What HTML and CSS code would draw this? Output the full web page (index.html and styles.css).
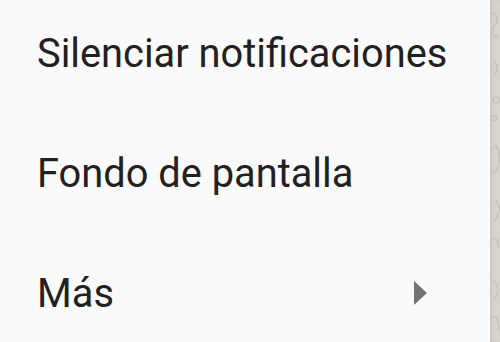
FILE: index.html
```html
<!DOCTYPE html>
<html lang="es">
<head>
<meta charset="utf-8">
<link rel="stylesheet" href="styles.css">
</head>
<body>
<div class="screen">
  <div class="menu">
    <div class="item"><span class="label">Silenciar notificaciones</span></div>
    <div class="item"><span class="label">Fondo de pantalla</span></div>
    <div class="item"><span class="label">Más</span><span class="arrow"></span></div>
  </div>
  <div class="wallpaper">
    <svg width="10" height="342" viewBox="0 0 10 342" fill="none" stroke="#c4c0ba" stroke-width="1.2">
      <path d="M0 14 C6 10 10 20 4 26 C0 30 2 36 8 38"/>
      <path d="M3 60 C8 64 9 72 3 76"/>
      <circle cx="6" cy="100" r="3"/>
      <circle cx="4" cy="118" r="2.5"/>
      <path d="M2 150 C6 140 10 150 9 162 C8 172 2 176 1 170"/>
      <path d="M6 200 L10 210 L4 222"/>
      <path d="M1 240 C5 236 9 240 8 248"/>
      <path d="M3 280 C9 284 9 294 4 300"/>
      <path d="M2 318 C6 314 9 320 9 330"/>
    </svg>
  </div>
</div>
</body>
</html>
```

FILE: styles.css
```css
html, body {
  margin: 0;
  padding: 0;
  width: 500px;
  height: 342px;
  overflow: hidden;
  background: #fafafa;
}

.screen {
  display: flex;
  width: 500px;
  height: 342px;
}

.menu {
  width: 490px;
  flex: none;
  background: #fafafa;
  margin-top: -7px;
  display: flex;
  flex-direction: column;
}

.item {
  height: 120px;
  flex: none;
  display: flex;
  align-items: center;
  padding-left: 37px;
  padding-right: 63px;
  font-family: Roboto, "Liberation Sans", sans-serif;
  font-size: 39.8px;
  color: #212121;
}

.label {
  flex: 1;
  white-space: nowrap;
  line-height: 1;
  padding-top: 2px;
}

.arrow {
  flex: none;
  width: 0;
  height: 0;
  border-top: 12.5px solid transparent;
  border-bottom: 12.5px solid transparent;
  border-left: 13px solid #757575;
}

.wallpaper {
  flex: 1;
  background: #d7d3cd;
  box-shadow: inset 2px 0 3px rgba(0, 0, 0, 0.06);
  overflow: hidden;
}

.wallpaper svg {
  display: block;
}
```
